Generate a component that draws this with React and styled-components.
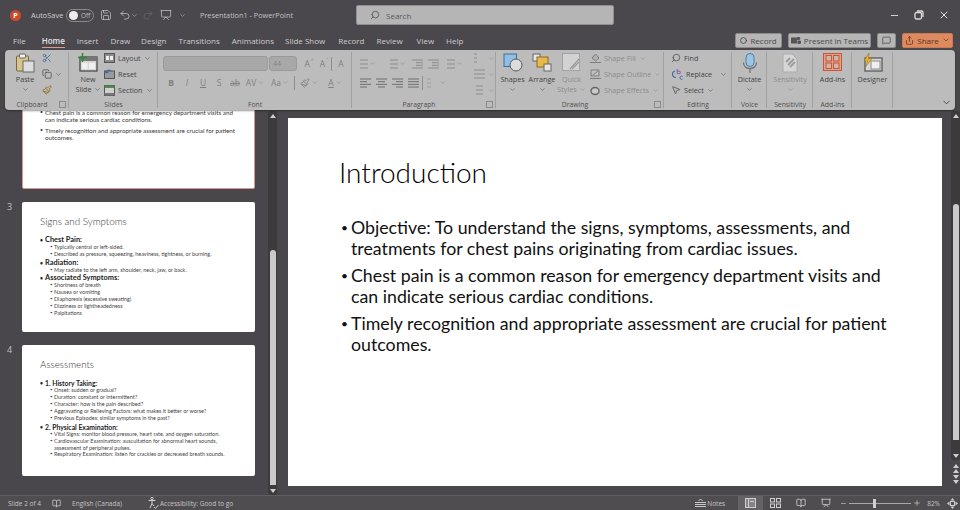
import React from "react";
import styled, { createGlobalStyle } from "styled-components";
import {
  ChevronDown,
  Minus,
  Plus,
  Search,
  Save,
  Undo2,
  Redo2,
  Scissors,
  Copy,
  Paintbrush,
  X,
  Circle,
  Presentation,
  MessageSquare,
  Share,
  MousePointer2,
  BookOpen,
} from "lucide-react";

const UI_FONT = `"Open Sans", "Noto Sans", sans-serif`;
const SLIDE_FONT = `"Lato", "Liberation Sans", sans-serif`;

const GlobalStyle = createGlobalStyle`
  html, body {
    margin: 0;
    padding: 0;
    background: #4a474c;
  }
  * {
    box-sizing: border-box;
  }
`;

const tabs = [
  ["File", 13],
  ["Home", 16],
  ["Insert", 12],
  ["Draw", 12],
  ["Design", 11],
  ["Transitions", 12],
  ["Animations", 12],
  ["Slide Show", 11],
  ["Record", 13],
  ["Review", 12],
  ["View", 14],
  ["Help", 12],
];

const slideTwo = [
  "Objective: To understand the signs, symptoms, assessments, and treatments for chest pains originating from cardiac issues.",
  "Chest pain is a common reason for emergency department visits and can indicate serious cardiac conditions.",
  "Timely recognition and appropriate assessment are crucial for patient outcomes.",
];

const signs = [
  ["Chest Pain:", ["Typically central or left-sided.", "Described as pressure, squeezing, heaviness, tightness, or burning."]],
  ["Radiation:", ["May radiate to the left arm, shoulder, neck, jaw, or back."]],
  [
    "Associated Symptoms:",
    ["Shortness of breath", "Nausea or vomiting", "Diaphoresis (excessive sweating)", "Dizziness or lightheadedness", "Palpitations"],
  ],
];

const assessments = [
  [
    "1. History Taking:",
    [
      "Onset: sudden or gradual?",
      "Duration: constant or intermittent?",
      "Character: how is the pain described?",
      "Aggravating or Relieving Factors: what makes it better or worse?",
      "Previous Episodes: similar symptoms in the past?",
    ],
  ],
  [
    "2. Physical Examination:",
    [
      "Vital Signs: monitor blood pressure, heart rate, and oxygen saturation.",
      "Cardiovascular Examination: auscultation for abnormal heart sounds, assessment of peripheral pulses.",
      "Respiratory Examination: listen for crackles or decreased breath sounds.",
    ],
  ],
];

// ---- drawn icons ----
const PasteIcon = () => (
  <svg width="20" height="20" viewBox="0 0 20 20">
    <rect x="1.5" y="3" width="12" height="15" rx="1" fill="#d8c48a" stroke="#77684a" />
    <rect x="4.5" y="1" width="6" height="4" rx="1" fill="#efefef" stroke="#666" />
    <rect x="8" y="8" width="11" height="11" fill="#dedede" stroke="#666" />
  </svg>
);

const NewSlideIcon = () => (
  <svg width="22" height="20" viewBox="0 0 22 20">
    <rect x="3" y="4" width="17" height="14" fill="#d8d8d8" stroke="#555" strokeWidth="1.4" />
    <rect x="3" y="4" width="17" height="4" fill="#777" />
    <rect x="5" y="10" width="5.5" height="6" fill="#f0f0f0" />
    <rect x="12" y="10" width="6" height="6" fill="#f0f0f0" />
    <path d="M5.5 0v9M1 4.5h9" stroke="#2f8a3e" strokeWidth="1.5" />
  </svg>
);

const LayoutIcon = () => (
  <svg width="11" height="10" viewBox="0 0 11 10">
    <rect x=".5" y=".5" width="10" height="9" fill="#8a8a8a" stroke="#555" />
    <rect x="2" y="3" width="3" height="4" fill="#eee" />
    <rect x="6" y="3" width="3" height="4" fill="#eee" />
  </svg>
);

const ResetIcon = () => (
  <svg width="11" height="10" viewBox="0 0 11 10">
    <rect x=".5" y="2" width="10" height="7.5" fill="#9a9a9a" stroke="#555" />
    <path d="M2 3.5A3 3 0 0 1 7 2" fill="none" stroke="#3b6fa8" strokeWidth="1.3" />
    <path d="M1 1l.6 3.4L5 4z" fill="#3b6fa8" />
  </svg>
);

const SectionIcon = () => (
  <svg width="11" height="11" viewBox="0 0 11 11">
    <rect x=".5" y=".5" width="10" height="10" fill="#cfcfcf" stroke="#555" />
    <rect x=".5" y=".5" width="10" height="2.5" fill="#4f8a56" />
    <rect x=".5" y="8" width="10" height="2.5" fill="#777" />
  </svg>
);

const ShapesIcon = () => (
  <svg width="20" height="19" viewBox="0 0 20 19">
    <rect x="1" y="1" width="12.5" height="12.5" fill="#8fbfe6" stroke="#3f6d96" />
    <circle cx="13" cy="12" r="6" fill="#dcdcdc" stroke="#5a5a5a" />
  </svg>
);

const ArrangeIcon = () => (
  <svg width="20" height="19" viewBox="0 0 20 19">
    <rect x="1" y="1" width="7" height="7" fill="#e6e6e6" stroke="#666" />
    <rect x="5" y="4" width="11" height="10" fill="#e9b949" stroke="#8a6d22" />
    <rect x="12" y="11" width="7" height="7" fill="#e6e6e6" stroke="#666" />
  </svg>
);

const QuickStylesIcon = () => (
  <svg width="19" height="19" viewBox="0 0 19 19">
    <rect x=".5" y=".5" width="17" height="17" fill="#d2d2d2" stroke="#a2a2a2" />
    <path d="M8 16L17 6M10 16l7-7" stroke="#9a9a9a" strokeWidth="1.2" />
  </svg>
);

const ShapeFillIcon = ({ kind }) => (
  <svg width="11" height="11" viewBox="0 0 11 11">
    {kind === "fill" && <path d="M5.5 1L9 5 5.5 8 2 5z M0 9.5h11" fill="#b0b0b0" stroke="#7d7d7d" />}
    {kind === "line" && <path d="M1 1h8v6H1z M3 6l5-4 M0 9.5h11" fill="#c0c0c0" stroke="#7d7d7d" />}
    {kind === "fx" && <path d="M1 6a4 3.5 0 1 1 8 0 4 3.5 0 1 1-8 0z" fill="#c9c9c9" stroke="#666" strokeWidth="1.4" />}
  </svg>
);

const ReplaceIcon = () => (
  <svg width="12" height="12" viewBox="0 0 12 12">
    <path d="M6.2 1v4.5M6.2 3.2h2a1.2 1.2 0 0 1 0 2.4h-2" fill="none" stroke="#8c56a8" strokeWidth="1" />
    <path d="M11.5 8.5a1.6 1.6 0 1 0 0 2.5" fill="none" stroke="#3b6fa8" strokeWidth="1" />
    <path d="M5 9.5A3.5 3.5 0 0 1 1.5 6 3 3 0 0 1 4 3" fill="none" stroke="#3b6fa8" strokeWidth="1.2" />
  </svg>
);

const MicIcon = () => (
  <svg width="18" height="20" viewBox="0 0 18 20">
    <rect x="5" y="0.5" width="8" height="13" rx="4" fill="#9cc6e6" stroke="#4d7ea6" />
    <path d="M2.5 9.5c0 4 3 6 6.5 6s6.5-2 6.5-6M9 15.5V20" fill="none" stroke="#666" strokeWidth="1.1" />
  </svg>
);

const SensitivityIcon = () => (
  <svg width="16" height="20" viewBox="0 0 16 20">
    <path d="M1 1h9l5 5v13H1z" fill="#d6d6d6" stroke="#ababab" />
    <path d="M6 12l6-6M4 9l4-4M8 14l5-5" stroke="#9d9d9d" strokeWidth="2" />
  </svg>
);

const AddInsIcon = () => (
  <svg width="19" height="18" viewBox="0 0 19 18">
    <rect x="0.5" y="0.5" width="18" height="17" fill="#e3a28a" stroke="#c4573a" />
    <rect x="3" y="2.5" width="5.5" height="5.5" fill="#cfb6ac" stroke="#c4573a" />
    <rect x="10.5" y="2.5" width="5.5" height="5.5" fill="#cfb6ac" stroke="#c4573a" />
    <rect x="3" y="10" width="5.5" height="5.5" fill="#cfb6ac" stroke="#c4573a" />
    <rect x="10.5" y="10" width="5.5" height="5.5" fill="#cfb6ac" stroke="#c4573a" />
  </svg>
);

const DesignerIcon = () => (
  <svg width="20" height="20" viewBox="0 0 20 20">
    <rect x="2" y="5" width="17" height="13" fill="#d8d8d8" stroke="#5a5a5a" strokeWidth="1.3" />
    <rect x="8" y="8" width="9" height="8" fill="#efefef" stroke="#8a8a8a" />
    <path d="M6 0L1 8h3.5L2.5 14 9 5.5H5.5z" fill="#e9b020" stroke="#8a6d22" strokeWidth=".5" />
  </svg>
);

const RestoreIcon = () => (
  <svg width="10" height="10" viewBox="0 0 10 10" fill="none" stroke="#ddd" strokeWidth="1.3">
    <rect x="1" y="2.5" width="6.5" height="6.5" rx="1.5" />
    <path d="M3 1h4.5A1.5 1.5 0 0 1 9 2.5V7" />
  </svg>
);

const AccessIcon = () => (
  <svg width="11" height="12" viewBox="0 0 11 12">
    <circle cx="4" cy="1.5" r="1.2" fill="none" stroke="#cfcfcf" />
    <path d="M.5 3.5h7M4 3.5v3L2 11M4 6.5l2 2.5M6 10l1.5 1.5L10.5 8" fill="none" stroke="#cfcfcf" />
  </svg>
);

const NotesIcon = () => (
  <svg width="11" height="10" viewBox="0 0 11 10">
    <path d="M3.5 3L5.5 1l2 2M0 4.5h11M0 6.5h11M0 8.5h11" fill="none" stroke="#c8c8c8" />
  </svg>
);

const NormalViewIcon = () => (
  <svg width="11" height="10" viewBox="0 0 11 10">
    <rect x=".5" y=".5" width="10" height="9" fill="#858585" stroke="#cfcfcf" />
    <path d="M3.5 1v8M5 3.5h4" stroke="#cfcfcf" />
  </svg>
);

const SorterIcon = () => (
  <svg width="11" height="10" viewBox="0 0 11 10" fill="none" stroke="#cfcfcf">
    <rect x=".5" y=".5" width="4" height="3.5" />
    <rect x="6.5" y=".5" width="4" height="3.5" />
    <rect x=".5" y="6" width="4" height="3.5" />
    <rect x="6.5" y="6" width="4" height="3.5" />
  </svg>
);

const FitIcon = () => (
  <svg width="11" height="11" viewBox="0 0 11 11">
    <path d="M5.5 0l2 2.5h-4zM5.5 11l2-2.5h-4zM0 5.5l2.5-2v4zM11 5.5l-2.5-2v4z" fill="#cfcfcf" />
    <rect x="3.5" y="3.5" width="4" height="4" fill="none" stroke="#cfcfcf" />
  </svg>
);

const TeamsMark = () => (
  <svg width="10" height="9" viewBox="0 0 10 9">
    <rect x="0" y="1.5" width="6" height="6" fill="#555" />
    <circle cx="7.5" cy="2.5" r="1.8" fill="#555" />
    <rect x="6.5" y="4.5" width="3.5" height="3.5" rx="1" fill="#555" />
  </svg>
);

// horizontal text lines for the paragraph tools, each row is [from, to]
const LinesIcon = ({ rows, color = "#8c8c8c" }) => (
  <svg width="11" height="10" viewBox="0 0 11 10">
    {rows.map(([a, b], i) => (
      <path key={i} d={`M${a} ${1 + (i * 8) / (rows.length - 1)}H${b}`} stroke={color} strokeWidth="1" />
    ))}
  </svg>
);

const Chev = ({ size = 7, color = "#555" }) => <ChevronDown size={size} color={color} strokeWidth={2} />;
const Dim = ({ size = 7 }) => <Chev size={size} color="#8c8c8c" />;

const listRows = [[3, 11], [3, 11], [3, 11]];
const indentRows = [[0, 11], [4, 11], [4, 11], [0, 11]];

const Outline = ({ items, headSize }) => (
  <ThumbBody $tight>
    {items.map(([head, subs]) => (
      <React.Fragment key={head}>
        <ThumbPoint $bold $size={headSize}>
          {head}
        </ThumbPoint>
        {subs.map((s) => (
          <ThumbSub key={s}>{s}</ThumbSub>
        ))}
      </React.Fragment>
    ))}
  </ThumbBody>
);

// ---- page ----
const App = () => {
  return (
    <Page>
      <GlobalStyle />
      <TitleBar>
        <Logo>P</Logo>
        <AutoSave>AutoSave</AutoSave>
        <Toggle>
          <Knob />
          Off
        </Toggle>
        <QuickTool $ml={6}>
          <Save size={12} strokeWidth={1.4} />
        </QuickTool>
        <QuickTool $ml={7}>
          <Undo2 size={12} strokeWidth={1.5} />
        </QuickTool>
        <Chev color="#bbb" />
        <QuickTool $ml={4} $dim>
          <Redo2 size={12} strokeWidth={1.4} />
        </QuickTool>
        <QuickTool $ml={6}>
          <Presentation size={12} strokeWidth={1.4} />
        </QuickTool>
        <QuickTool $ml={7}>
          <Chev color="#bbb" />
        </QuickTool>
        <DocTitle>Presentation1 - PowerPoint</DocTitle>
        <SearchBox>
          <Search size={10} color="#555" style={{ transform: "scaleX(-1)" }} />
          Search
        </SearchBox>
        <WindowButtons>
          <Minus size={11} color="#ddd" />
          <RestoreIcon />
          <X size={12} color="#ddd" />
        </WindowButtons>
      </TitleBar>

      <TabRow>
        {tabs.map(([name, ml]) => (
          <Tab key={name} $ml={ml} $active={name === "Home"}>
            {name}
          </Tab>
        ))}
        <TabActions>
          <OutlineButton $w={47}>
            <Circle size={7} strokeWidth={3} />
            Record
          </OutlineButton>
          <OutlineButton $w={83}>
            <TeamsMark />
            Present in Teams
          </OutlineButton>
          <OutlineButton $w={19}>
            <MessageSquare size={9} />
          </OutlineButton>
          <ShareButton $w={51}>
            <Share size={9} />
            Share
            <Chev size={8} color="#5b3520" />
          </ShareButton>
        </TabActions>
      </TabRow>

      <Workspace>
        <Ribbon>
          <Group $w={64}>
            <GroupBody $pl={9}>
              <BigButton $w={22}>
                <BigIcon>
                  <PasteIcon />
                </BigIcon>
                <BigLabel>Paste</BigLabel>
                <BigLabel>
                  <Chev />
                </BigLabel>
              </BigButton>
              <SmallCol $ml={6}>
                <SmallRow>
                  <Scissors size={10} color="#3f6d96" />
                </SmallRow>
                <SmallRow>
                  <Copy size={10} color="#555" />
                  <Chev />
                </SmallRow>
                <SmallRow>
                  <Paintbrush size={10} color="#8a6d22" />
                </SmallRow>
              </SmallCol>
            </GroupBody>
            <GroupFooter $launcher>Clipboard</GroupFooter>
          </Group>

          <Group $w={89}>
            <GroupBody $pl={7}>
              <BigButton $w={24}>
                <BigIcon>
                  <NewSlideIcon />
                </BigIcon>
                <BigLabel>New</BigLabel>
                <BigLabel>
                  Slide <Chev />
                </BigLabel>
              </BigButton>
              <SmallCol $ml={4}>
                <SmallRow>
                  <LayoutIcon />
                  Layout <Chev />
                </SmallRow>
                <SmallRow>
                  <ResetIcon />
                  Reset
                </SmallRow>
                <SmallRow>
                  <SectionIcon />
                  Section <Chev />
                </SmallRow>
              </SmallCol>
            </GroupBody>
            <GroupFooter>Slides</GroupFooter>
          </Group>

          <Group $w={194}>
            <ToolStack $pl={5}>
              <ToolRow>
                <FieldBox $w={105} />
                <FieldBox $w={28} $ml={1}>
                  44
                </FieldBox>
                <ToolSlot $w={18} $ml={3}>
                  A<sup>^</sup>
                </ToolSlot>
                <ToolSlot $w={12}>
                  A<sup>ˇ</sup>
                </ToolSlot>
                <RowDivider />
                <ToolSlot $w={16}>A</ToolSlot>
              </ToolRow>
              <ToolRow $mt={4}>
                <ToolSlot $w={16} $bold>
                  B
                </ToolSlot>
                <ToolSlot $w={16} $italic>
                  I
                </ToolSlot>
                <ToolSlot $w={16} $underline>
                  U
                </ToolSlot>
                <ToolSlot $w={16}>S</ToolSlot>
                <ToolSlot $w={16} $strike>
                  ab
                </ToolSlot>
                <ToolSlot $w={24}>
                  AV <Dim />
                </ToolSlot>
                <ToolSlot $w={26}>
                  Aa <Dim />
                </ToolSlot>
                <RowDivider />
                <ToolSlot $w={26}>
                  <Paintbrush size={10} /> <Dim />
                </ToolSlot>
                <ToolSlot $w={26} $underline>
                  A <Dim />
                </ToolSlot>
              </ToolRow>
            </ToolStack>
            <GroupFooter>Font</GroupFooter>
          </Group>

          <Group $w={144}>
            <GroupBody $pl={5}>
              <ToolStack $w={117}>
                <ToolRow>
                  <ToolSlot $w={19}>
                    <LinesIcon rows={listRows} />
                    <Dim />
                  </ToolSlot>
                  <ToolSlot $w={26} $ml={7}>
                    <LinesIcon rows={listRows} />
                    <Dim />
                  </ToolSlot>
                  <ToolSlot $w={16}>
                    <LinesIcon rows={indentRows} />
                  </ToolSlot>
                  <ToolSlot $w={16}>
                    <LinesIcon rows={indentRows} />
                  </ToolSlot>
                  <ToolSlot $w={24}>
                    <LinesIcon rows={listRows} />
                    <Dim />
                  </ToolSlot>
                </ToolRow>
                <ToolRow $mt={4}>
                  <ToolSlot $w={16}>
                    <LinesIcon color="#6e6e6e" rows={[[0, 11], [0, 7], [0, 11], [0, 7]]} />
                  </ToolSlot>
                  <ToolSlot $w={16}>
                    <LinesIcon color="#6e6e6e" rows={[[0, 11], [2, 9], [0, 11], [2, 9]]} />
                  </ToolSlot>
                  <ToolSlot $w={16}>
                    <LinesIcon color="#6e6e6e" rows={[[0, 11], [4, 11], [0, 11], [4, 11]]} />
                  </ToolSlot>
                  <ToolSlot $w={16}>
                    <LinesIcon color="#6e6e6e" rows={[[0, 11], [0, 11], [0, 11], [0, 11]]} />
                  </ToolSlot>
                  <RowDivider />
                  <ToolSlot $w={24}>
                    <LinesIcon color="#a0a0a0" rows={[[0, 4], [0, 4], [0, 4]]} />
                    <Dim />
                  </ToolSlot>
                </ToolRow>
              </ToolStack>
              <SmallCol>
                <SmallRow $center>
                  <LinesIcon rows={[[0, 3], [0, 3], [0, 3]]} />
                  <Dim />
                </SmallRow>
                <SmallRow $center>
                  <LinesIcon rows={[[0, 11], [0, 11], [0, 11]]} />
                  <Dim />
                </SmallRow>
                <SmallRow $center>
                  <LinesIcon rows={[[2, 9], [2, 9], [2, 9]]} />
                  <Dim />
                </SmallRow>
              </SmallCol>
            </GroupBody>
            <GroupFooter $launcher>Paragraph</GroupFooter>
          </Group>

          <Group $w={168}>
            <GroupBody $pl={1}>
              <BigButton $w={31}>
                <BigIcon>
                  <ShapesIcon />
                </BigIcon>
                <BigLabel>Shapes</BigLabel>
                <BigLabel>
                  <Chev />
                </BigLabel>
              </BigButton>
              <BigButton $w={28}>
                <BigIcon>
                  <ArrangeIcon />
                </BigIcon>
                <BigLabel>Arrange</BigLabel>
                <BigLabel>
                  <Chev />
                </BigLabel>
              </BigButton>
              <BigButton $w={31}>
                <BigIcon>
                  <QuickStylesIcon />
                </BigIcon>
                <BigLabel $dim>Quick</BigLabel>
                <BigLabel $dim>
                  Styles <Dim />
                </BigLabel>
              </BigButton>
              <SmallCol $ml={3}>
                <SmallRow $dim>
                  <ShapeFillIcon kind="fill" />
                  Shape Fill <Dim />
                </SmallRow>
                <SmallRow $dim>
                  <ShapeFillIcon kind="line" />
                  Shape Outline <Dim />
                </SmallRow>
                <SmallRow $dim>
                  <ShapeFillIcon kind="fx" />
                  Shape Effects <Dim />
                </SmallRow>
              </SmallCol>
            </GroupBody>
            <GroupFooter $launcher>Drawing</GroupFooter>
          </Group>

          <Group $w={68}>
            <GroupBody $pl={7}>
              <SmallCol>
                <SmallRow>
                  <Search size={10} color="#555" style={{ transform: "scaleX(-1)" }} />
                  Find
                </SmallRow>
                <SmallRow>
                  <ReplaceIcon />
                  Replace
                  <FarChev>
                    <Chev />
                  </FarChev>
                </SmallRow>
                <SmallRow>
                  <MousePointer2 size={10} color="#555" />
                  Select <Chev />
                </SmallRow>
              </SmallCol>
            </GroupBody>
            <GroupFooter>Editing</GroupFooter>
          </Group>

          <Group $w={35}>
            <GroupBody>
              <BigButton $w={35}>
                <BigIcon>
                  <MicIcon />
                </BigIcon>
                <BigLabel>Dictate</BigLabel>
                <BigLabel>
                  <Chev />
                </BigLabel>
              </BigButton>
            </GroupBody>
            <GroupFooter>Voice</GroupFooter>
          </Group>

          <Group $w={46}>
            <GroupBody>
              <BigButton $w={46}>
                <BigIcon>
                  <SensitivityIcon />
                </BigIcon>
                <BigLabel $dim>Sensitivity</BigLabel>
                <BigLabel>
                  <Dim />
                </BigLabel>
              </BigButton>
            </GroupBody>
            <GroupFooter>Sensitivity</GroupFooter>
          </Group>

          <Group $w={39}>
            <GroupBody>
              <BigButton $w={39}>
                <BigIcon>
                  <AddInsIcon />
                </BigIcon>
                <BigLabel>Add-ins</BigLabel>
              </BigButton>
            </GroupBody>
            <GroupFooter>Add-ins</GroupFooter>
          </Group>

          <Group $w={41}>
            <GroupBody>
              <BigButton $w={41}>
                <BigIcon>
                  <DesignerIcon />
                </BigIcon>
                <BigLabel>Designer</BigLabel>
              </BigButton>
            </GroupBody>
            <GroupFooter />
          </Group>

          <Collapse>
            <ChevronDown size={11} color="#444" />
          </Collapse>
        </Ribbon>

        <ThumbPane>
          <ThumbRow>
            <ThumbNumber />
            {/* the top of this slide is hidden by the ribbon, only the last two points show */}
            <Thumb $selected>
              {slideTwo.slice(1).map((t) => (
                <ThumbPoint key={t}>{t}</ThumbPoint>
              ))}
            </Thumb>
          </ThumbRow>
          <ThumbRow>
            <ThumbNumber>3</ThumbNumber>
            <Thumb>
              <ThumbTitle>Signs and Symptoms</ThumbTitle>
              <Outline items={signs} headSize={7.4} />
            </Thumb>
          </ThumbRow>
          <ThumbRow>
            <ThumbNumber>4</ThumbNumber>
            <Thumb>
              <ThumbTitle>Assessments</ThumbTitle>
              <Outline items={assessments} headSize={6.8} />
            </Thumb>
          </ThumbRow>
        </ThumbPane>

        <ScrollTrack>
          <Arrow />
          <ScrollThumb $mt={132} $h={235} />
          <FlexGap />
          <Arrow $down />
        </ScrollTrack>

        <Editor>
          <Slide>
            <SlideTitle>Introduction</SlideTitle>
            <SlideBody>
              {slideTwo.map((t) => (
                <SlidePoint key={t}>{t}</SlidePoint>
              ))}
            </SlideBody>
          </Slide>
        </Editor>

        <RightRail>
          <ScrollTrack $grow>
            <Arrow />
            <ScrollThumb $mt={86} $h={236} />
            <FlexGap />
            <Arrow $down />
          </ScrollTrack>
          <JumpBlock>
            <SlideJump>
              <Arrow />
              <Arrow />
            </SlideJump>
            <SlideJump>
              <Arrow $down />
              <Arrow $down />
            </SlideJump>
          </JumpBlock>
        </RightRail>
      </Workspace>

      <StatusBar>
        <StatusText $ml={8}>Slide 2 of 4</StatusText>
        <StatusIcon $ml={11}>
          <BookOpen size={9} />
        </StatusIcon>
        <StatusText $ml={11}>English (Canada)</StatusText>
        <StatusIcon $ml={26}>
          <AccessIcon />
        </StatusIcon>
        <StatusText $ml={1}>Accessibility: Good to go</StatusText>
        <StatusRight>
          <NotesIcon />
          <StatusText $ml={1}>Notes</StatusText>
          <ViewButton $ml={13} $active>
            <NormalViewIcon />
          </ViewButton>
          <ViewButton>
            <SorterIcon />
          </ViewButton>
          <ViewButton>
            <BookOpen size={10} />
          </ViewButton>
          <ViewButton>
            <Presentation size={10} />
          </ViewButton>
          <Minus size={7} color="#cfcfcf" style={{ marginLeft: 2 }} />
          <ZoomTrack>
            <ZoomKnob />
          </ZoomTrack>
          <Plus size={8} color="#cfcfcf" />
          <StatusText $ml={6}>82%</StatusText>
          <StatusIcon $ml={7}>
            <FitIcon />
          </StatusIcon>
        </StatusRight>
      </StatusBar>
    </Page>
  );
};

export default App;

const Page = styled.div`
  width: 960px;
  height: 510px;
  overflow: hidden;
  display: flex;
  flex-direction: column;
  background: #4a474c;
  font-family: ${UI_FONT};
  color: #cfcfcf;
`;

const TitleBar = styled.div`
  height: 30px;
  display: flex;
  align-items: center;
  padding-left: 10px;
  background: #4a484c;
  font-size: 8px;
`;

const Logo = styled.div`
  width: 11px;
  height: 11px;
  border-radius: 50%;
  background: #cf4a28;
  color: #fff;
  font-size: 7px;
  font-weight: 700;
  line-height: 11px;
  text-align: center;
`;

const AutoSave = styled.span`
  margin-left: 10px;
  width: 35px;
  font-size: 7.4px;
  color: #cdcdcd;
`;

const Toggle = styled.div`
  width: 28px;
  height: 13px;
  border: 1px solid #8a8a8a;
  border-radius: 7px;
  display: flex;
  align-items: center;
  gap: 3px;
  padding-left: 2px;
  font-size: 6.5px;
  color: #bbb;
`;

const Knob = styled.div`
  width: 9px;
  height: 9px;
  border-radius: 50%;
  background: #eee;
`;

const QuickTool = styled.div`
  margin-left: ${(p) => p.$ml || 0}px;
  display: flex;
  color: ${(p) => (p.$dim ? "#6a686c" : "#c8c8c8")};
`;

const DocTitle = styled.span`
  margin-left: 14px;
  width: 156px;
  color: #c2c2c2;
  font-size: 7.3px;
  white-space: nowrap;
`;

const SearchBox = styled.div`
  width: 258px;
  height: 20px;
  background: #b5b5b5;
  border: 1px solid #8f8f8f;
  border-radius: 2px;
  display: flex;
  align-items: center;
  gap: 6px;
  padding-left: 13px;
  color: #5a5a5a;
  font-size: 8px;
`;

const WindowButtons = styled.div`
  margin-left: auto;
  width: 71px;
  padding-right: 10px;
  display: flex;
  justify-content: space-between;
  align-items: center;
`;

const TabRow = styled.div`
  height: 20px;
  display: flex;
  align-items: center;
  background: #4a484c;
  font-size: 8px;
`;

const Tab = styled.div`
  margin-left: ${(p) => p.$ml}px;
  color: ${(p) => (p.$active ? "#e4e4e4" : "#cdcdcd")};
  font-weight: ${(p) => (p.$active ? 600 : 400)};
  border-bottom: 1px solid ${(p) => (p.$active ? "#e09a8c" : "transparent")};
  padding: 2px 0 1px;
  white-space: nowrap;
`;

const TabActions = styled.div`
  margin-left: auto;
  padding-right: 7px;
  display: flex;
  gap: 6px;
`;

const OutlineButton = styled.div`
  width: ${(p) => p.$w}px;
  height: 15px;
  display: flex;
  align-items: center;
  justify-content: center;
  gap: 3px;
  background: #b6b6b6;
  border: 1px solid #8c8c8c;
  border-radius: 2px;
  color: #4a4a4a;
  font-size: 8px;
  white-space: nowrap;
`;

const ShareButton = styled(OutlineButton)`
  background: #de8a5e;
  border-color: #c87a50;
  color: #5b3520;
`;

const Workspace = styled.div`
  position: relative;
  flex: 1;
  min-height: 0;
  display: flex;
`;

const Ribbon = styled.div`
  position: absolute;
  z-index: 2;
  top: 0;
  left: 5px;
  width: 950px;
  height: 60px;
  display: flex;
  background: #bcbcbc;
  border-radius: 4px;
  box-shadow: 0 1px 2px rgba(0, 0, 0, 0.4);
  color: #444;
  font-size: 7.2px;
`;

const Group = styled.section`
  position: relative;
  width: ${(p) => p.$w}px;
  flex: none;
  display: flex;
  flex-direction: column;

  &::after {
    content: "";
    position: absolute;
    right: 0;
    top: 2px;
    bottom: 2px;
    width: 1px;
    background: #a0a0a0;
  }
`;

const GroupBody = styled.div`
  height: 50px;
  display: flex;
  padding-left: ${(p) => p.$pl || 0}px;
`;

const GroupFooter = styled.div`
  height: 10px;
  padding-right: ${(p) => (p.$launcher ? 10 : 0)}px;
  text-align: center;
  font-size: 6.8px;
  line-height: 10px;
  color: #505050;
  white-space: nowrap;

  ${(p) =>
    p.$launcher &&
    `
    &::after {
      content: "";
      position: absolute;
      right: 3px;
      bottom: 2px;
      width: 5px;
      height: 5px;
      border: 1px solid #8c8c8c;
    }
  `}
`;

const BigButton = styled.div`
  width: ${(p) => p.$w}px;
  flex: none;
  display: flex;
  flex-direction: column;
  align-items: center;
  padding-top: 3px;
`;

const BigIcon = styled.div`
  height: 21px;
  display: flex;
  justify-content: center;
`;

const BigLabel = styled.div`
  height: 10px;
  display: flex;
  align-items: center;
  gap: 2px;
  line-height: 9px;
  white-space: nowrap;
  color: ${(p) => (p.$dim ? "#8c8c8c" : "#444")};
`;

const SmallCol = styled.div`
  display: flex;
  flex-direction: column;
  margin-left: ${(p) => p.$ml || 0}px;
`;

const SmallRow = styled.div`
  height: 16px;
  display: flex;
  align-items: center;
  gap: 3px;
  white-space: nowrap;
  ${(p) => p.$center && "justify-content: center;"}
  color: ${(p) => (p.$dim ? "#8c8c8c" : "#444")};
`;

const FarChev = styled.span`
  display: flex;
  margin-left: 5px;
`;

const ToolStack = styled.div`
  height: 50px;
  ${(p) => p.$w && `width: ${p.$w}px; flex: none;`}
  padding: 6px 0 0 ${(p) => p.$pl || 0}px;
  display: flex;
  flex-direction: column;
`;

const ToolRow = styled.div`
  height: 15px;
  margin-top: ${(p) => p.$mt || 0}px;
  display: flex;
  align-items: center;
`;

const FieldBox = styled.div`
  width: ${(p) => p.$w}px;
  height: 15px;
  margin-left: ${(p) => p.$ml || 0}px;
  padding-left: 3px;
  background: #a8a8a8;
  border: 1px solid #9a9a9a;
  border-radius: 3px;
  color: #858585;
  font-size: 7px;
  line-height: 13px;
`;

const ToolSlot = styled.div`
  width: ${(p) => p.$w}px;
  flex: none;
  margin-left: ${(p) => p.$ml || 0}px;
  display: flex;
  align-items: center;
  justify-content: center;
  gap: 1px;
  color: #808080;
  font-size: 8.5px;
  font-weight: ${(p) => (p.$bold ? 700 : 400)};
  font-style: ${(p) => (p.$italic ? "italic" : "normal")};
  text-decoration: ${(p) => (p.$underline ? "underline" : p.$strike ? "line-through" : "none")};
  white-space: nowrap;

  sup {
    font-size: 5px;
    line-height: 5px;
    align-self: flex-start;
  }
`;

const RowDivider = styled.div`
  width: 1px;
  height: 14px;
  flex: none;
  background: #8f8f8f;
  margin: 0 1px;
`;

const Collapse = styled.div`
  margin-left: auto;
  align-self: flex-end;
  padding: 0 3px 2px 0;
  display: flex;
`;

const ThumbPane = styled.div`
  width: 268px;
  flex: none;
  padding-top: 8px;
  display: flex;
  flex-direction: column;
  gap: 13px;
`;

const ThumbRow = styled.div`
  display: flex;
  align-items: flex-start;
`;

const ThumbNumber = styled.div`
  width: 22px;
  padding-left: 7px;
  font-size: 9px;
  line-height: 10px;
  color: #c0c0c0;
`;

const Thumb = styled.div`
  width: 233px;
  height: 130.5px;
  flex: none;
  background: #fff;
  border-radius: 2px;
  padding: ${(p) => (p.$selected ? "46px 14px 0 17px" : "12px 0 0 18px")};
  font-family: ${SLIDE_FONT};
  color: #333;
  border: ${(p) => (p.$selected ? "1.5px solid #d9988c" : "none")};
`;

const ThumbTitle = styled.div`
  font-size: 9.8px;
  font-weight: 300;
  line-height: 14px;
  color: #333;
`;

const ThumbBody = styled.div`
  margin-top: 8.2px;
  width: 200px;
`;

const ThumbPoint = styled.div`
  position: relative;
  padding-left: 5px;
  margin-top: ${(p) => (p.$bold ? 1 : 3.7)}px;
  font-size: ${(p) => (p.$bold ? p.$size : 6.3)}px;
  line-height: ${(p) => (p.$bold ? 8 : 7.3)}px;
  font-weight: ${(p) => (p.$bold ? 700 : 400)};
  color: ${(p) => (p.$bold ? "#222" : "#3a3a3a")};

  &::before {
    content: "•";
    position: absolute;
    left: 0;
    font-size: 5px;
  }
`;

const ThumbSub = styled.div`
  position: relative;
  padding: 0 8px 0 14px;
  font-size: 5.45px;
  line-height: 6.9px;
  color: #444;

  &::before {
    content: "•";
    position: absolute;
    left: 10px;
    font-size: 4.5px;
  }
`;

const ScrollTrack = styled.div`
  width: 9px;
  flex: ${(p) => (p.$grow ? "1" : "none")};
  margin-top: 61px;
  padding: 3px 1px 2px;
  display: flex;
  flex-direction: column;
  align-items: center;
  background: #3c3a3d;
  border-radius: 3px;
`;

const ScrollThumb = styled.div`
  width: 6px;
  flex: none;
  height: ${(p) => p.$h}px;
  margin-top: ${(p) => p.$mt}px;
  background: #cacaca;
  border-radius: 3px 3px 0 0;
`;

const FlexGap = styled.div`
  flex: 1;
`;

const Arrow = styled.div`
  width: 0;
  height: 0;
  flex: none;
  border-left: 3.5px solid transparent;
  border-right: 3.5px solid transparent;
  ${(p) => (p.$down ? "border-top: 4px solid #cfcfcf;" : "border-bottom: 4px solid #cfcfcf;")}
`;

const Editor = styled.div`
  width: 674px;
  flex: none;
  padding: 68px 0 0 11px;
`;

const Slide = styled.div`
  width: 654px;
  height: 368px;
  background: #fff;
  padding: 36px 0 0 51px;
  font-family: ${SLIDE_FONT};
  color: #111;
`;

const SlideTitle = styled.div`
  font-size: 28px;
  font-weight: 300;
  line-height: 36px;
  color: #000;
`;

const SlideBody = styled.div`
  margin-top: 27px;
  width: 556px;
`;

const SlidePoint = styled.div`
  position: relative;
  padding-left: 12px;
  margin-bottom: 6px;
  font-size: 17.75px;
  line-height: 21px;

  &::before {
    content: "•";
    position: absolute;
    left: 2px;
    font-size: 12px;
  }
`;

const RightRail = styled.div`
  width: 9px;
  flex: none;
  display: flex;
  flex-direction: column;
`;

const JumpBlock = styled.div`
  height: 35px;
  flex: none;
  padding-top: 4px;
  display: flex;
  flex-direction: column;
  gap: 2px;
`;

const SlideJump = styled.div`
  display: flex;
  flex-direction: column;
  align-items: center;
  gap: 1px;
`;

const StatusBar = styled.div`
  height: 15px;
  flex: none;
  display: flex;
  align-items: center;
  background: #4f4d50;
  border-top: 1px solid #5e5c5f;
`;

const StatusText = styled.span`
  margin-left: ${(p) => p.$ml || 0}px;
  font-size: 6.5px;
  color: #c6c6c6;
  white-space: nowrap;
`;

const StatusIcon = styled.div`
  margin-left: ${(p) => p.$ml || 0}px;
  display: flex;
  color: #cfcfcf;
`;

const StatusRight = styled.div`
  margin-left: auto;
  padding-right: 2px;
  display: flex;
  align-items: center;
`;

const ViewButton = styled.div`
  width: 25px;
  height: 14px;
  margin-left: ${(p) => p.$ml || 0}px;
  display: flex;
  align-items: center;
  justify-content: center;
  color: #cfcfcf;
  background: ${(p) => (p.$active ? "#646265" : "transparent")};
`;

const ZoomTrack = styled.div`
  position: relative;
  width: 62px;
  height: 1px;
  margin: 0 2px;
  background: #a8a8a8;
`;

const ZoomKnob = styled.div`
  position: absolute;
  left: 24px;
  top: -4px;
  width: 3px;
  height: 9px;
  background: #cfcfcf;
`;
